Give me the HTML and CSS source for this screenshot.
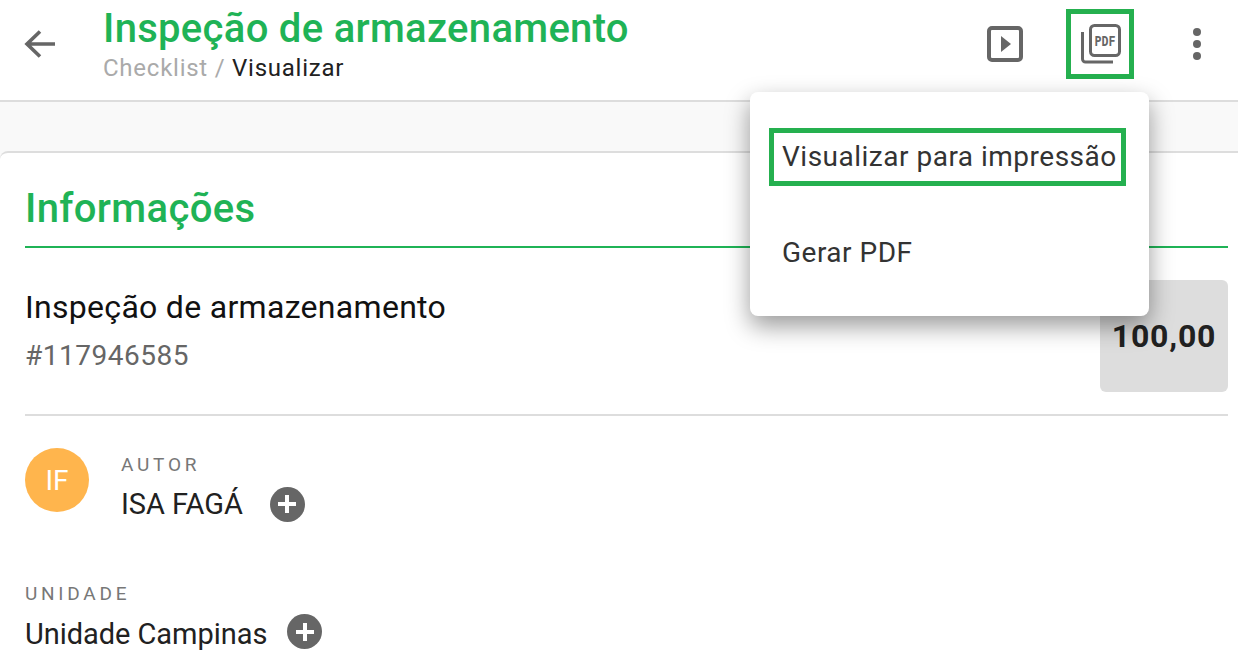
FILE: index.html
```html
<!DOCTYPE html>
<html lang="pt-BR">
<head>
<meta charset="UTF-8" />
<meta name="viewport" content="width=device-width, initial-scale=1" />
<title>Inspeção de armazenamento</title>
<link rel="stylesheet" href="styles.css">
</head>
<body>

<header class="topbar">
  <svg class="back-icon" width="32" height="32" viewBox="0 0 32 32" aria-hidden="true">
    <path d="M31 16H3M16 3.500 3 16l13 12.500" fill="none" stroke="#666" stroke-width="3.600"/>
  </svg>
  <div class="titles">
    <h1>Inspeção de armazenamento</h1>
    <div class="crumbs"><span class="crumb-muted">Checklist /</span> Visualizar</div>
  </div>
  <div class="actions">
    <svg class="play-icon" width="36" height="36" viewBox="0 0 36 36" aria-hidden="true">
      <rect x="2" y="2" width="32" height="32" rx="3" fill="none" stroke="#666" stroke-width="4"/>
      <path d="M14 10v16l10-8z" fill="#666"/>
    </svg>
    <div class="pdf-button">
      <svg width="40" height="40" viewBox="0 0 40 40" aria-hidden="true">
        <rect x="9.500" y="1.500" width="29" height="30" rx="4" fill="none" stroke="#666" stroke-width="3"/>
        <path d="M1.500 8v27a3 3 0 0 0 3 3H32" fill="none" stroke="#666" stroke-width="3"/>
        <text class="pdf-text" x="24" y="22" text-anchor="middle" textLength="21" lengthAdjust="spacingAndGlyphs">PDF</text>
      </svg>
    </div>
    <svg class="more-icon" width="10" height="34" viewBox="0 0 10 34" aria-hidden="true">
      <circle cx="5" cy="5" r="4" fill="#666"/>
      <circle cx="5" cy="17" r="4" fill="#666"/>
      <circle cx="5" cy="29" r="4" fill="#666"/>
    </svg>
  </div>
</header>

<main class="page">
  <section class="card">
    <h2>Informações</h2>
    <div class="summary">
      <div>
        <div class="check-name">Inspeção de armazenamento</div>
        <div class="check-id">#117946585</div>
      </div>
      <div class="score">100,00</div>
    </div>
    <div class="author">
      <div class="avatar">IF</div>
      <div>
        <div class="label">AUTOR</div>
        <div class="value">ISA FAGÁ <span class="plus"></span></div>
      </div>
    </div>
    <div class="unit">
      <div class="label">UNIDADE</div>
      <div class="value">Unidade Campinas <span class="plus"></span></div>
    </div>
  </section>
</main>

<div class="menu">
  <div class="menu-item menu-item-marked">Visualizar para impressão</div>
  <div class="menu-item">Gerar PDF</div>
</div>

</body>
</html>
```

FILE: styles.css
```css
* {
  box-sizing: border-box;
}
html, body {
  margin: 0;
  height: 100%;
  overflow: hidden;
}
body {
  font-family: Roboto, "Liberation Sans", sans-serif;
  color: #212121;
  background: #fff;
}
.topbar {
  height: 102px;
  border-bottom: 2px solid #ddd;
  display: flex;
  align-items: flex-start;
  padding: 0 36px 0 24px;
}
.back-icon {
  margin-top: 28px;
}
.titles {
  margin-left: 47px;
  padding-top: 7px;
}
h1 {
  margin: 0;
  font-size: 40px;
  line-height: 44px;
  font-weight: 500;
  color: #1fb356;
  letter-spacing: 0.3px;
}
.crumbs {
  font-size: 24px;
  line-height: 28px;
  letter-spacing: 0.75px;
  margin-top: 3px;
}
.crumb-muted {
  color: #aaa;
}
.actions {
  margin-left: auto;
  display: flex;
  align-items: flex-start;
}
.play-icon {
  margin-top: 26px;
}
.pdf-button {
  width: 68px;
  height: 70px;
  margin: 9px 58px 0 43px;
  border: 5px solid #25b04f;
  padding: 10px 0 0 10px;
}
.pdf-text {
  font-family: "DejaVu Sans Mono", monospace;
  font-size: 13.500px;
  font-weight: 700;
  fill: #666;
}
.more-icon {
  margin-top: 27px;
}
.page {
  background: #f9f9f9;
  padding-top: 49px;
}
.card {
  background: #fff;
  border-top: 2px solid #ddd;
  border-top-left-radius: 8px;
  height: 520px;
  padding: 33px 10px 0 25px;
}
h2 {
  margin: 0;
  font-size: 40px;
  line-height: 46px;
  font-weight: 500;
  color: #1fb356;
  letter-spacing: 0.35px;
  border-bottom: 2px solid #1fb356;
  padding-bottom: 14px;
}
.summary {
  display: flex;
  justify-content: space-between;
  border-bottom: 2px solid #ddd;
  padding: 32px 0 22px;
}
.check-name {
  font-size: 32px;
  line-height: 34px;
  letter-spacing: 0.3px;
  color: #111;
  margin-top: 10px;
}
.check-id {
  font-size: 28px;
  line-height: 34px;
  letter-spacing: 0.5px;
  color: #666;
  margin-top: 15px;
}
.score {
  width: 128px;
  height: 112px;
  border-radius: 6px;
  background: #ddd;
  font-size: 32px;
  font-weight: 700;
  letter-spacing: 0.8px;
  display: flex;
  align-items: center;
  justify-content: center;
}
.author {
  display: flex;
  gap: 32px;
  margin-top: 32px;
}
.avatar {
  width: 64px;
  height: 64px;
  border-radius: 50%;
  background: #ffb54d;
  color: #fff;
  font-size: 28px;
  display: flex;
  align-items: center;
  justify-content: center;
}
.label {
  font-size: 19px;
  line-height: 22px;
  letter-spacing: 3.750px;
  color: #777;
  margin-top: 6px;
}
.value {
  font-size: 29px;
  line-height: 36px;
  letter-spacing: -0.05px;
  margin-top: 10px;
  display: flex;
  align-items: center;
  gap: 20px;
}
.plus {
  width: 35px;
  height: 35px;
  border-radius: 50%;
  background-color: #666;
  background-image: linear-gradient(#fff, #fff), linear-gradient(#fff, #fff);
  background-position: center;
  background-size: 18px 4px, 4px 18px;
  background-repeat: no-repeat;
}
.author .plus {
  margin-left: 7px;
}
.unit .plus {
  margin-bottom: 4px;
}
.unit {
  margin-top: 61px;
}
.unit .value {
  margin-top: 9px;
}
.menu {
  position: absolute;
  left: 750px;
  top: 92px;
  width: 399px;
  height: 224px;
  background: #fff;
  border-radius: 8px;
  box-shadow: 0 10px 24px rgba(0, 0, 0, 0.4);
  padding: 36px 23px 0 19px;
}
.menu-item {
  height: 58px;
  font-size: 28px;
  line-height: 48px;
  letter-spacing: 0.5px;
  color: #333;
  padding-left: 13px;
  white-space: nowrap;
  margin-bottom: 43px;
}
.menu-item-marked {
  border: 5px solid #25b04f;
  padding-left: 8px;
}
```
